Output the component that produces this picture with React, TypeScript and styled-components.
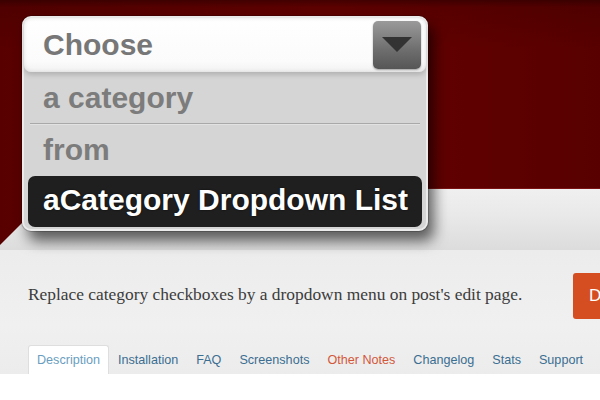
import React from "react";
import styled, { createGlobalStyle } from "styled-components";

const Global = createGlobalStyle`
  html, body { margin: 0; padding: 0; background: #ffffff; }
  body { width: 600px; height: 400px; overflow: hidden; font-family: "Liberation Sans", Arial, sans-serif; }
`;

const Page = styled.div`
  width: 600px;
  height: 400px;
  overflow: hidden;
  background: #ffffff;
`;

const Banner = styled.div`
  position: relative;
  height: 250px;
  border-bottom: 1px solid #cbcbcb;
  padding: 16px 0 0 22px;
  box-sizing: border-box;
`;

const Art = styled.svg`
  position: absolute;
  inset: 0;
  width: 600px;
  height: 250px;
`;

const Dropdown = styled.div`
  position: relative;
  z-index: 1;
  width: 406px;
  box-sizing: border-box;
  background: #d5d5d5;
  border: 2px solid #ebebeb;
  border-radius: 9px;
  padding: 0 4px 2px;
  box-shadow: 0 0 0 1px rgba(0, 0, 0, 0.18), 6px 10px 14px rgba(0, 0, 0, 0.6);
`;

const SelectBox = styled.div`
  display: flex;
  align-items: center;
  height: 54px;
  margin: 0 -4px;
  background: linear-gradient(#ffffff, #fbfbfb 80%, #f2f2f2);
  border-radius: 7px;
  box-shadow: inset 0 0 4px rgba(0, 0, 0, 0.12), 0 3px 5px rgba(0, 0, 0, 0.16);
`;

const SelectLabel = styled.span`
  flex: 1;
  padding-left: 19px;
  font: bold 30px/54px "Liberation Sans", Arial, sans-serif;
  color: #777777;
`;

const ArrowButton = styled.div`
  display: flex;
  align-items: center;
  justify-content: center;
  width: 48px;
  height: 48px;
  margin-right: 5px;
  border-radius: 5px;
  background: linear-gradient(#9a9a9a, #6e6e6e 60%, #565656);
  box-shadow: 0 1px 2px rgba(0, 0, 0, 0.35);
`;

const Option = styled.div<{ $selected?: boolean; $h: number; $lh: number }>`
  height: ${(p) => p.$h}px;
  box-sizing: border-box;
  padding: 0 0 ${(p) => p.$h - p.$lh}px 15px;
  font: bold 30px/${(p) => p.$lh}px "Liberation Sans", Arial, sans-serif;
  white-space: nowrap;
  color: ${(p) => (p.$selected ? "#ffffff" : "#7c7c7c")};
  background: ${(p) => (p.$selected ? "#1f1f1f" : "transparent")};
  border-radius: ${(p) => (p.$selected ? "7px" : "0")};
  margin-top: ${(p) => (p.$selected ? "2px" : "0")};
  text-shadow: ${(p) => (p.$selected ? "0 0 2px rgba(0,0,0,0.8)" : "none")};
`;

const Divider = styled.div`
  height: 1px;
  margin: 0 2px;
  background: #a9a9a9;
  border-bottom: 1px solid #e2e2e2;
`;

const Header = styled.div`
  height: 124px;
  box-sizing: border-box;
  padding: 23px 0 0 28px;
  background: linear-gradient(#ececec, #f0f0f0 60%, #ececec);
  display: flex;
  flex-direction: column;
`;

const Intro = styled.div`
  display: grid;
  grid-template-columns: 545px max-content;
  align-items: center;
  height: 46px;
`;

const Description = styled.p`
  margin: 0;
  font-family: "Liberation Serif", "Times New Roman", serif;
  font-size: 17.4px;
  color: #3c3c3c;
  padding-bottom: 3px;
  white-space: nowrap;
`;

const DownloadButton = styled.div`
  height: 46px;
  box-sizing: border-box;
  padding: 0 16px;
  border-radius: 3px;
  background: #d54e21;
  color: #ffffff;
  font: 17px/46px "Liberation Sans", Arial, sans-serif;
  white-space: nowrap;
`;

const Tabs = styled.div`
  display: flex;
  margin-top: auto;
  height: 29px;
`;

const Tab = styled.div<{ $active?: boolean; $color?: string }>`
  padding: 0 8px;
  border: 1px solid ${(p) => (p.$active ? "#dedede" : "transparent")};
  border-bottom: none;
  border-radius: 3px 3px 0 0;
  background: ${(p) => (p.$active ? "#ffffff" : "transparent")};
  color: ${(p) => p.$color ?? "#3b6e91"};
  font: 12.6px/29px "Liberation Sans", Arial, sans-serif;
  white-space: nowrap;
`;

const Body = styled.div`
  height: 30px;
  background: #ffffff;
`;

const tabs: { label: string; color?: string; active?: boolean }[] = [
  { label: "Description", color: "#6a9ec0", active: true },
  { label: "Installation" },
  { label: "FAQ" },
  { label: "Screenshots" },
  { label: "Other Notes", color: "#d2583a" },
  { label: "Changelog" },
  { label: "Stats" },
  { label: "Support" },
];

export default function App() {
  return (
    <Page>
      <Global />
      <Banner>
        <Art viewBox="0 0 600 250" aria-hidden>
          <defs>
            <linearGradient id="light" x1="0" y1="0" x2="0" y2="1">
              <stop offset="0" stopColor="#f3f3f3" />
              <stop offset="0.75" stopColor="#f0f0f0" />
              <stop offset="0.86" stopColor="#e9e9e9" />
              <stop offset="1" stopColor="#dcdcdc" />
            </linearGradient>
            <linearGradient id="red" x1="0" y1="0" x2="1" y2="0">
              <stop offset="0" stopColor="#580000" />
              <stop offset="0.55" stopColor="#670000" />
              <stop offset="0.8" stopColor="#5e0000" />
              <stop offset="1" stopColor="#580000" />
            </linearGradient>
            <linearGradient id="top" x1="0" y1="0" x2="0" y2="1">
              <stop offset="0" stopColor="#000" stopOpacity="0.35" />
              <stop offset="0.03" stopColor="#000" stopOpacity="0.1" />
              <stop offset="0.2" stopColor="#000" stopOpacity="0" />
            </linearGradient>
          </defs>
          <rect x="0" y="0" width="600" height="250" fill="url(#light)" />
          <polygon points="0,0 600,0 600,188 22,188 22,223 0,245" fill="url(#red)" />
          <polygon points="0,0 600,0 600,188 22,188 22,223 0,245" fill="url(#top)" />
          <line x1="22" y1="188.5" x2="600" y2="188.5" stroke="#7a1414" strokeWidth="1" />
        </Art>
        <Dropdown>
          <SelectBox>
            <SelectLabel>Choose</SelectLabel>
            <ArrowButton>
              <svg width="30" height="16" viewBox="0 0 30 16">
                <polygon points="0,0 30,0 15,15" fill="#333333" />
              </svg>
            </ArrowButton>
          </SelectBox>
          <Option $h={51} $lh={51}>a category</Option>
          <Divider />
          <Option $h={49} $lh={49}>from</Option>
          <Option $selected $h={51} $lh={48}>aCategory Dropdown List</Option>
        </Dropdown>
      </Banner>
      <Header>
        <Intro>
          <Description>Replace category checkboxes by a dropdown menu on post's edit page.</Description>
          <DownloadButton>Download Version 2.6</DownloadButton>
        </Intro>
        <Tabs>
          {tabs.map((t) => (
            <Tab key={t.label} $active={t.active} $color={t.color}>
              {t.label}
            </Tab>
          ))}
        </Tabs>
      </Header>
      <Body />
    </Page>
  );
}
